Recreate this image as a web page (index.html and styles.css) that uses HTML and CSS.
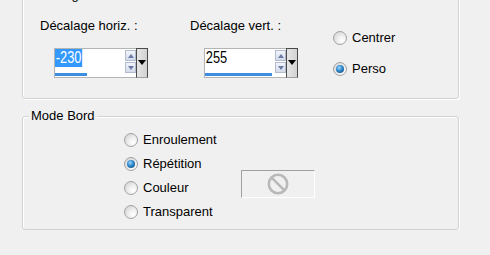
FILE: index.html
```html
<!DOCTYPE html>
<html lang="fr">
<head>
    <meta charset="UTF-8">
    <title>Décalage</title>
    <link rel="stylesheet" href="styles.css">
</head>
<body>
    <div class="page">
        <div class="group group-offsets">
            <div class="group-title">Décalage</div>
            <div class="offsets">
                <div class="offset offset-h">
                    <div class="label">Décalage horiz. :</div>
                    <div class="spin">
                        <div class="spin-box">
                            <div class="spin-main">
                                <div class="spin-value"><span class="selected">-230</span></div>
                                <div class="spin-bar" style="width: 32px"></div>
                            </div>
                            <div class="spin-arrows">
                                <div class="arrow arrow-up"></div>
                                <div class="arrow arrow-down"></div>
                            </div>
                        </div>
                        <div class="spin-drop"></div>
                    </div>
                </div>
                <div class="offset offset-v">
                    <div class="label">Décalage vert. :</div>
                    <div class="spin">
                        <div class="spin-box">
                            <div class="spin-main">
                                <div class="spin-value"><span>255</span></div>
                                <div class="spin-bar" style="width: 67px"></div>
                            </div>
                            <div class="spin-arrows">
                                <div class="arrow arrow-up"></div>
                                <div class="arrow arrow-down"></div>
                            </div>
                        </div>
                        <div class="spin-drop"></div>
                    </div>
                </div>
                <div class="center-options">
                    <div class="option"><span class="radio"></span>Centrer</div>
                    <div class="option option-perso"><span class="radio checked"></span>Perso</div>
                </div>
            </div>
        </div>

        <div class="group group-edge">
            <div class="group-title">Mode Bord</div>
            <div class="edge">
                <div class="edge-options">
                    <div class="option"><span class="radio"></span>Enroulement</div>
                    <div class="option"><span class="radio checked"></span>Répétition</div>
                    <div class="option"><span class="radio"></span>Couleur</div>
                    <div class="option option-last"><span class="radio"></span>Transparent</div>
                </div>
                <div class="color-btn">
                    <svg width="22" height="22" viewBox="0 0 22 22">
                        <circle cx="11" cy="11" r="9.2" fill="none" stroke="#b9b9b9" stroke-width="2.6"/>
                        <line x1="4.6" y1="4.6" x2="17.4" y2="17.4" stroke="#b9b9b9" stroke-width="2.6"/>
                    </svg>
                </div>
            </div>
        </div>
    </div>
</body>
</html>
```

FILE: styles.css
```css
body {
    margin: 0;
    background: #f0f0f0;
    font-family: "Liberation Sans", Arial, sans-serif;
    font-size: 13px;
    color: #000;
    overflow: hidden;
}
.page {
    padding-left: 22px;
}
.group {
    box-sizing: border-box;
    width: 437px;
    border: 1px solid #d3d3d3;
    border-radius: 3px;
    box-shadow: inset 1px 1px 0 #fff, 1px 1px 0 #fff;
}
.group-offsets {
    height: 104px;
    margin-top: -5px;
}
.group-edge {
    height: 114px;
    margin-top: 17px;
}
.group-title {
    width: fit-content;
    margin: -9px 0 0 6px;
    padding: 0 2px;
    line-height: 15px;
    background: #f0f0f0;
}
.offsets {
    display: flex;
    padding: 16px 0 0 17px;
}
.offset-h {
    width: 150px;
}
.offset-v {
    width: 143px;
}
.label {
    line-height: 15px;
}
.spin {
    display: flex;
    margin: 15px 0 0 14px;
}
.spin-box {
    box-sizing: border-box;
    display: flex;
    width: 82px;
    height: 30px;
    border: 1px solid #b4b4b4;
    border-right: none;
    background: #fff;
}
.spin-main {
    flex: 1;
    display: flex;
    flex-direction: column;
    justify-content: space-between;
    padding-bottom: 1px;
}
.spin-value {
    height: 18px;
    font-size: 16px;
    line-height: 18px;
}
.spin-value span {
    display: inline-block;
    padding: 0 1px;
    transform: scaleX(0.8);
    transform-origin: left;
}
.spin-value .selected {
    background: #3399ff;
    color: #fff;
}
.spin-bar {
    height: 3px;
    background: #3d8de0;
}
.spin-arrows {
    display: flex;
    flex-direction: column;
    gap: 1px;
    margin-top: 1px;
}
.arrow {
    box-sizing: border-box;
    width: 11px;
    height: 11px;
    display: flex;
    align-items: center;
    justify-content: center;
    border: 1px solid #b3bccc;
    background: linear-gradient(#f2f5fb, #d3dbea);
}
.arrow::before {
    content: "";
    border-left: 3px solid transparent;
    border-right: 3px solid transparent;
}
.arrow-up::before {
    border-bottom: 4px solid #6b7ba3;
}
.arrow-down::before {
    border-top: 4px solid #6b7ba3;
}
.spin-drop {
    box-sizing: border-box;
    width: 12px;
    height: 30px;
    display: flex;
    align-items: center;
    justify-content: center;
    border: 1px solid #4a4a4a;
    border-bottom-color: #a0a0a0;
    background: linear-gradient(90deg, #e6e6e6, #d2d2d2);
}
.spin-drop::before {
    content: "";
    border-left: 4px solid transparent;
    border-right: 4px solid transparent;
    border-top: 5px solid #000;
    margin-top: -2px;
}
.center-options {
    padding-top: 12px;
}
.option {
    display: flex;
    align-items: center;
    height: 15px;
    line-height: 15px;
}
.option-perso {
    margin-top: 16px;
}
.radio {
    box-sizing: border-box;
    width: 14px;
    height: 14px;
    margin-right: 5px;
    display: flex;
    align-items: center;
    justify-content: center;
    border: 1px solid #a2a2a2;
    border-radius: 50%;
    background: radial-gradient(circle at 68% 70%, #ffffff 0, #f1f1f1 35%, #cdcdcd 100%);
}
.radio.checked::after {
    content: "";
    width: 8px;
    height: 8px;
    border-radius: 50%;
    background: radial-gradient(circle at 40% 35%, #9bd8ff 0, #2f86c8 45%, #0d3d6e 100%);
}
.edge {
    display: flex;
    padding: 9px 0 0 101px;
}
.edge-options {
    width: 117px;
}
.edge-options .option + .option {
    margin-top: 9px;
}
.edge-options .option-last {
    margin-top: 6px;
}
.color-btn {
    box-sizing: border-box;
    width: 74px;
    height: 28px;
    margin-top: 38px;
    display: flex;
    align-items: center;
    justify-content: center;
    border: 1px solid #fff;
    border-top-color: #a0a0a0;
    border-left-color: #a0a0a0;
}
```
